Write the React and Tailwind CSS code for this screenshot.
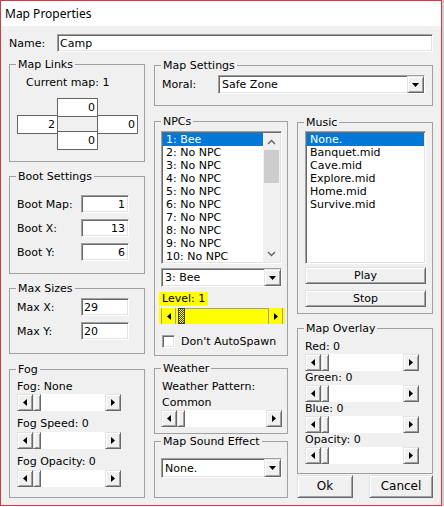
import React from "react";

const sunken =
  "border border-t-[#a0a0a0] border-l-[#a0a0a0] border-r-white border-b-white shadow-[inset_1px_1px_0_#696969,inset_-1px_-1px_0_#e3e3e3]";
const raised =
  "border border-t-[#e3e3e3] border-l-[#e3e3e3] border-r-[#696969] border-b-[#696969] shadow-[inset_1px_1px_0_#ffffff,inset_-1px_-1px_0_#a0a0a0]";

const npcs = [
  "1: Bee",
  "2: No NPC",
  "3: No NPC",
  "4: No NPC",
  "5: No NPC",
  "6: No NPC",
  "7: No NPC",
  "8: No NPC",
  "9: No NPC",
  "10: No NPC",
];

const songs = ["None.", "Banquet.mid", "Cave.mid", "Explore.mid", "Home.mid", "Survive.mid"];

function Group({ label, className = "", children }) {
  return (
    <fieldset className={`min-w-0 border border-[#a0a0a0] ${className}`}>
      <legend className="ml-[6px] px-[2px] leading-[13px]">{label}</legend>
      {children}
    </fieldset>
  );
}

function Arrow({ dir }) {
  if (dir === "down") {
    return (
      <svg width="7" height="4" viewBox="0 0 7 4">
        <polygon points="0,0 7,0 3.5,4" fill="#000" />
      </svg>
    );
  }
  return (
    <svg width="4" height="7" viewBox="0 0 4 7">
      <polygon points={dir === "left" ? "4,0 4,7 0,3.5" : "0,0 0,7 4,3.5"} fill="#000" />
    </svg>
  );
}

function HScroll({ className = "" }) {
  return (
    <div className={`flex h-[17px] bg-white ${className}`}>
      <div className={`flex w-[16px] items-center justify-center bg-[#f0f0f0] ${raised}`}>
        <Arrow dir="left" />
      </div>
      <div className={`w-[8px] bg-[#f0f0f0] ${raised}`} />
      <div className="flex-1" />
      <div className={`flex w-[16px] items-center justify-center bg-[#f0f0f0] ${raised}`}>
        <Arrow dir="right" />
      </div>
    </div>
  );
}

function Select({ value, className = "" }) {
  return (
    <div className={`flex bg-white ${sunken} ${className}`}>
      <div className="flex flex-1 items-center pl-[3px]">{value}</div>
      <div className={`flex w-[17px] items-center justify-center bg-[#f0f0f0] ${raised}`}>
        <Arrow dir="down" />
      </div>
    </div>
  );
}

function Field({ label, value, right }) {
  return (
    <div className="flex h-[18px] items-center">
      <span className="w-[64px]">{label}</span>
      <div
        className={`flex h-[18px] w-[48px] items-center bg-white ${sunken} ${
          right ? "justify-end pr-[3px]" : "pl-[2px]"
        }`}
      >
        {value}
      </div>
    </div>
  );
}

function LinkBox({ value }) {
  return (
    <div className="flex h-[19px] w-[41px] items-center justify-end border border-[#646464] bg-white pr-[2px]">
      {value}
    </div>
  );
}

function ListRow({ text, selected }) {
  return (
    <div className={`h-[13px] pl-[3px] ${selected ? "bg-[#0078d7] text-white" : ""}`}>{text}</div>
  );
}

export default function App() {
  return (
    <div className="flex h-[507px] w-[444px] bg-white font-['DejaVu_Sans',sans-serif] text-[11px] leading-[13px] text-black">
      <div className="flex h-[506px] w-[442px] flex-col border border-[#e3343f]">
        <div className="flex h-[25px] items-center bg-white pl-[4px] font-['Noto_Sans',sans-serif] text-[12px]">
          Map Properties
        </div>

        <div className="flex-1 bg-[#f0f0f0] px-[8px] pt-[8px]">
          <div className="flex h-[18px] items-center">
            <span className="w-[48px]">Name:</span>
            <div className={`flex h-[18px] flex-1 items-center bg-white pl-[2px] ${sunken}`}>Camp</div>
          </div>

          <div className="flex gap-[9px]">
            {/* left column */}
            <div className="flex w-[136px] flex-col">
              <Group label="Map Links" className="mt-[6px] h-[104px]">
                <div className="mt-[5px] pl-[16px]">Current map: 1</div>
                <div className="mt-[9px] pl-[7px]">
                  <div className="ml-[40px]">
                    <LinkBox value="0" />
                  </div>
                  <div className="-mt-[2px] flex">
                    <LinkBox value="2" />
                    <div className="w-[39px]" />
                    <LinkBox value="0" />
                  </div>
                  <div className="-mt-[3px] ml-[40px]">
                    <LinkBox value="0" />
                  </div>
                </div>
              </Group>

              <Group label="Boot Settings" className="mt-[8px] h-[104px]">
                <div className="mt-[12px] flex flex-col gap-[6px] pl-[7px]">
                  <Field label="Boot Map:" value="1" right />
                  <Field label="Boot X:" value="13" right />
                  <Field label="Boot Y:" value="6" right />
                </div>
              </Group>

              <Group label="Max Sizes" className="mt-[8px] h-[72px]">
                <div className="mt-[3px] flex flex-col gap-[6px] pl-[7px]">
                  <Field label="Max X:" value="29" />
                  <Field label="Max Y:" value="20" />
                </div>
              </Group>

              <Group label="Fog" className="mt-[9px] h-[135px]">
                <div className="pl-[7px]">
                  <div className="mt-[4px]">Fog: None</div>
                  <HScroll className="mt-[1px] w-[104px]" />
                  <div className="mt-[6px]">Fog Speed: 0</div>
                  <HScroll className="mt-[2px] w-[104px]" />
                  <div className="mt-[6px]">Fog Opacity: 0</div>
                  <HScroll className="mt-[2px] w-[104px]" />
                </div>
              </Group>
            </div>

            {/* right area */}
            <div className="flex w-[279px] flex-col">
              <Group label="Map Settings" className="mt-[7px] h-[47px]">
                <div className="mt-[3px] flex items-center pl-[7px]">
                  <span className="w-[56px]">Moral:</span>
                  <Select value="Safe Zone" className="h-[19px] w-[207px]" />
                </div>
              </Group>

              <div className="mt-[9px] flex gap-[9px]">
                {/* middle column */}
                <div className="flex w-[134px] flex-col">
                  <Group label="NPCs" className="h-[241px]">
                    <div className={`ml-[6px] mt-[3px] flex h-[133px] w-[121px] bg-white p-[1px] ${sunken}`}>
                      <div className="flex-1 overflow-hidden">
                        {npcs.map((n, i) => (
                          <ListRow key={n} text={n} selected={i === 0} />
                        ))}
                      </div>
                      <div className="flex w-[17px] flex-col bg-[#f0f0f0]">
                        <div className="flex h-[17px] items-center justify-center">
                          <svg width="9" height="6" viewBox="0 0 9 6">
                            <path d="M1 5 L4.5 1.5 L8 5" fill="none" stroke="#606060" strokeWidth="1.4" />
                          </svg>
                        </div>
                        <div className="mx-[1px] h-[33px] bg-[#cdcdcd]" />
                        <div className="flex-1" />
                        <div className="flex h-[17px] items-center justify-center">
                          <svg width="9" height="6" viewBox="0 0 9 6">
                            <path d="M1 1 L4.5 4.5 L8 1" fill="none" stroke="#606060" strokeWidth="1.4" />
                          </svg>
                        </div>
                      </div>
                    </div>
                    <Select value="3: Bee" className="ml-[6px] mt-[4px] h-[19px] w-[121px]" />
                    <div className="ml-[4px] mt-[5px] h-[14px] w-fit bg-[#ffff00] px-[3px]">Level: 1</div>
                    <div className="ml-[4px] mt-[2px] flex h-[16px] w-[126px] bg-[#ffff00] px-[2px]">
                      <div className="flex w-[15px] items-center justify-center border-x border-[#a0a0a0]">
                        <Arrow dir="left" />
                      </div>
                      <div className="ml-[2px] w-[7px] border border-[#404040] bg-[length:2px_2px] bg-[image:repeating-conic-gradient(#404040_0%_25%,#ffff00_0%_50%)]" />
                      <div className="flex-1 border-t border-[#a0a0a0]" />
                      <div className="flex w-[15px] items-center justify-center border-x border-[#a0a0a0]">
                        <Arrow dir="right" />
                      </div>
                    </div>
                    <div className="ml-[7px] mt-[11px] flex items-center gap-[6px]">
                      <div className={`h-[13px] w-[13px] bg-white ${sunken}`} />
                      <span>Don't AutoSpawn</span>
                    </div>
                  </Group>

                  <Group label="Weather" className="mt-[6px] h-[72px]">
                    <div className="mt-[5px] pl-[7px]">Weather Pattern:</div>
                    <div className="mt-[3px] pl-[7px]">Common</div>
                    <HScroll className="ml-[6px] mt-[1px] w-[121px]" />
                  </Group>

                  <Group label="Map Sound Effect" className="mt-[1px] h-[63px]">
                    <Select value="None." className="ml-[6px] mt-[10px] h-[20px] w-[121px]" />
                  </Group>
                </div>

                {/* right column */}
                <div className="flex w-[136px] flex-col">
                  <Group label="Music" className="mt-[1px] h-[198px]">
                    <div className={`ml-[7px] mt-[2px] h-[133px] w-[121px] bg-white p-[1px] ${sunken}`}>
                      {songs.map((s, i) => (
                        <ListRow key={s} text={s} selected={i === 0} />
                      ))}
                    </div>
                    <button className={`ml-[7px] mt-[3px] flex h-[17px] w-[121px] items-center justify-center bg-[#f0f0f0] ${raised}`}>
                      Play
                    </button>
                    <button className={`ml-[7px] mt-[6px] flex h-[17px] w-[121px] items-center justify-center bg-[#f0f0f0] ${raised}`}>
                      Stop
                    </button>
                  </Group>

                  <Group label="Map Overlay" className="mt-[8px] h-[152px]">
                    <div className="pl-[7px]">
                      <div className="mt-[5px]">Red: 0</div>
                      <HScroll className="mt-[1px] w-[114px]" />
                      <div>Green: 0</div>
                      <HScroll className="mt-[1px] w-[114px]" />
                      <div>Blue: 0</div>
                      <HScroll className="mt-[1px] w-[114px]" />
                      <div>Opacity: 0</div>
                      <HScroll className="mt-[1px] w-[114px]" />
                    </div>
                  </Group>

                  <div className="mt-[1px] flex gap-[16px]">
                    <button className={`flex h-[23px] w-[56px] items-center justify-center bg-[#f0f0f0] text-[12px] ${raised}`}>
                      Ok
                    </button>
                    <button className={`flex h-[23px] w-[64px] items-center justify-center bg-[#f0f0f0] text-[12px] ${raised}`}>
                      Cancel
                    </button>
                  </div>
                </div>
              </div>
            </div>
          </div>
        </div>
      </div>
      <div className="h-[506px] w-[2px] bg-[#cfcfcf]" />
    </div>
  );
}
